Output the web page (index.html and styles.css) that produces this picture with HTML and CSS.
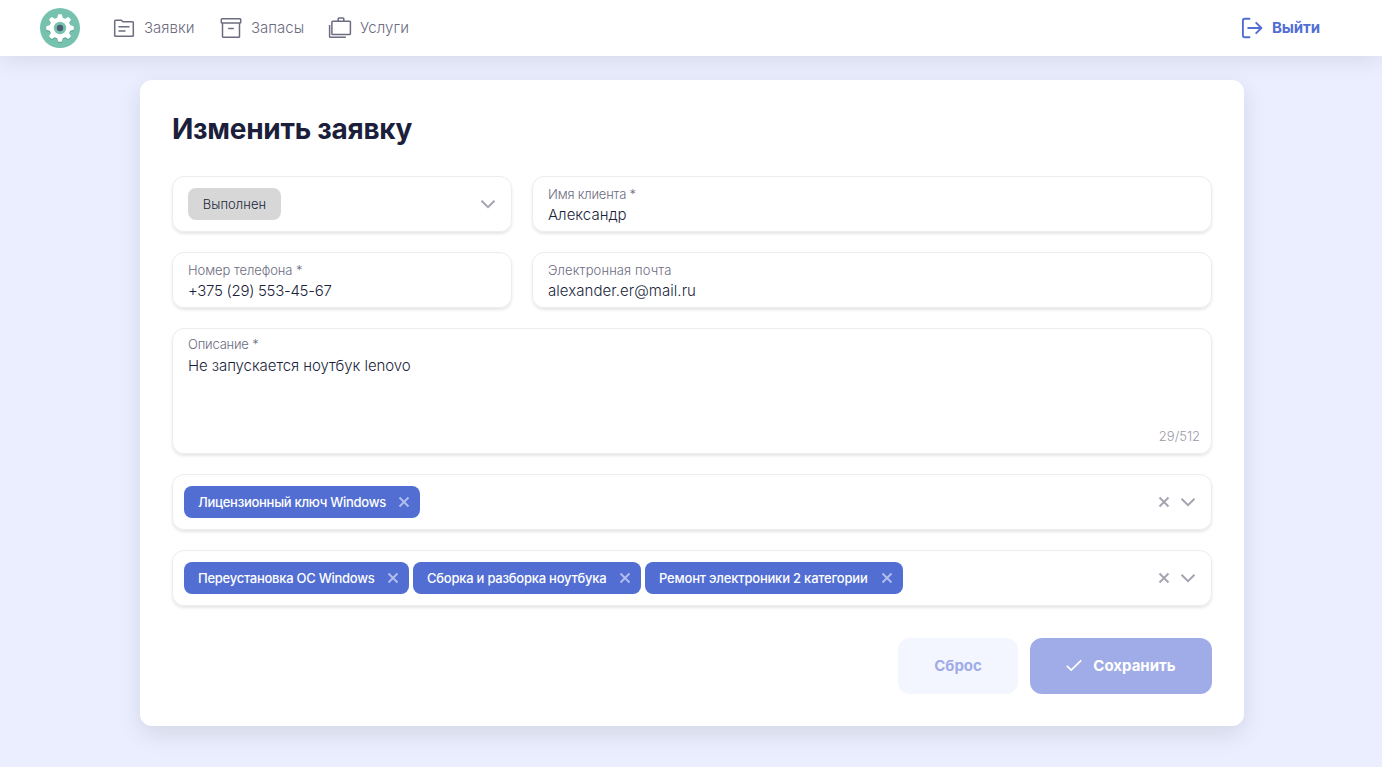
FILE: index.html
```html
<!DOCTYPE html>
<html lang="ru">
<head>
<meta charset="utf-8">
<title>Изменить заявку</title>
<link rel="stylesheet" href="styles.css">
</head>
<body>
<header class="header">
  <svg class="logo" viewBox="0 0 40 40">
    <circle cx="20" cy="20" r="20" fill="#76c2af"/>
    <g transform="translate(20 21.2)" fill="#5fa593" stroke="#5fa593" stroke-linejoin="round"><use href="#gear"/></g>
    <g transform="translate(20 20)" fill="#fff" stroke="#fff" stroke-linejoin="round"><g id="gear"><circle r="10.5" stroke="none"/><path id="tooth" stroke-width="1" d="M-2.6-9 -1.5-13.2H1.5L2.6-9Z"/><use href="#tooth" transform="rotate(45)"/><use href="#tooth" transform="rotate(90)"/><use href="#tooth" transform="rotate(135)"/><use href="#tooth" transform="rotate(180)"/><use href="#tooth" transform="rotate(225)"/><use href="#tooth" transform="rotate(270)"/><use href="#tooth" transform="rotate(315)"/></g></g>
    <circle cx="20" cy="20" r="6.2" fill="#76c2af"/>
    <circle cx="20" cy="20" r="3.2" fill="#4f5d73"/>
  </svg>
  <nav class="nav">
    <a class="nav-link nav-orders"><svg class="icon" viewBox="0 0 24 24"><path d="M2.7 20.2V5q0-.8.8-.8h5.8l1.6 1.6h9.6q.8 0 .8.8v12.8q0 .8-.8.8H3.5q-.8 0-.8-.8M6.5 10.7h11M6.5 15h7"/></svg><span>Заявки</span></a>
    <a class="nav-link nav-stock"><svg class="icon" viewBox="0 0 24 24"><path d="M3.1 2.7h17.8q.8 0 .8.8v2.8q0 .8-.8.8H3.1q-.8 0-.8-.8V3.500q0-.8.8-.8M3.500 7.200v13.200q0 .8.8.8h15.400q.8 0 .8-.8V7.200M9.200 12.500h5.600"/></svg><span>Запасы</span></a>
    <a class="nav-link nav-services"><svg class="icon" viewBox="0 0 24 24"><path d="M4.700 5.200h16.900q.8 0 .8.8v11.800q0 .8-.8.8H4.700q-.8 0-.8-.8V6q0-.8.8-.8M10.200 5V2.700q0-.8.8-.8h4q.8 0 .8.8V5M1.600 9v11.400q0 .8.8.8h15.400"/></svg><span>Услуги</span></a>
  </nav>
  <a class="logout"><svg class="icon" viewBox="0 0 24 24"><path d="M9.500 2.700H4.700q-1.800 0-1.800 1.800v15q0 1.800 1.800 1.800h4.800M8.200 12H21M16.200 6.800 21.400 12l-5.200 5.200"/></svg><span>Выйти</span></a>
</header>
<main class="card">
  <h1 class="title"><span>Изменить заявку</span></h1>
  <form class="form">
    <div class="row">
      <div class="field select status-field">
        <span class="status">Выполнен</span>
        <svg class="arrow" viewBox="0 0 16 16"><path d="M1.500 4.700 8 11.100l6.500-6.400"/></svg>
      </div>
      <div class="field"><label class="label name-label">Имя клиента *</label><div class="value name-value">Александр</div></div>
    </div>
    <div class="row">
      <div class="field"><label class="label phone-label">Номер телефона *</label><div class="value phone-value">+375 (29) 553-45-67</div></div>
      <div class="field"><label class="label mail-label">Электронная почта</label><div class="value mail-value">alexander.er@mail.ru</div></div>
    </div>
    <div class="field area"><label class="label desc-label">Описание *</label><div class="value desc-value">Не запускается ноутбук lenovo</div><span class="counter">29/512</span></div>
    <div class="field select">
      <div class="tags">
        <span class="tag tag-license"><span>Лицензионный ключ Windows</span><svg class="cross" viewBox="0 0 12 12"><path d="m1.500 1.500 9 9m0-9-9 9"/></svg></span>
      </div>
      <svg class="cross clear" viewBox="0 0 12 12"><path d="m1.500 1.500 9 9m0-9-9 9"/></svg>
      <svg class="arrow" viewBox="0 0 16 16"><path d="M1.500 4.700 8 11.100l6.500-6.400"/></svg>
    </div>
    <div class="field select">
      <div class="tags">
        <span class="tag tag-reinstall"><span>Переустановка ОС Windows</span><svg class="cross" viewBox="0 0 12 12"><path d="m1.500 1.500 9 9m0-9-9 9"/></svg></span>
        <span class="tag tag-assembly"><span>Сборка и разборка ноутбука</span><svg class="cross" viewBox="0 0 12 12"><path d="m1.500 1.500 9 9m0-9-9 9"/></svg></span>
        <span class="tag tag-repair"><span>Ремонт электроники 2 категории</span><svg class="cross" viewBox="0 0 12 12"><path d="m1.500 1.500 9 9m0-9-9 9"/></svg></span>
      </div>
      <svg class="cross clear" viewBox="0 0 12 12"><path d="m1.500 1.500 9 9m0-9-9 9"/></svg>
      <svg class="arrow" viewBox="0 0 16 16"><path d="M1.500 4.700 8 11.100l6.500-6.400"/></svg>
    </div>
    <div class="actions">
      <button type="button" class="button reset">Сброс</button>
      <button type="button" class="button save"><svg class="check" viewBox="0 0 16 16"><path d="M.8 7.800 5.200 12.100 15.200 2.300"/></svg><span>Сохранить</span></button>
    </div>
  </form>
</main>
</body>
</html>
```

FILE: styles.css
```css
* { box-sizing: border-box; }
body { margin: 0; height: 767px; overflow: hidden; background: #ebeefe; font-family: Inter, "Noto Sans", sans-serif; font-size: 15px; line-height: 20px; color: #1b1f3b; white-space: nowrap; }
svg { display: block; flex: none; fill: none; stroke: currentColor; }
.header { height: 56px; display: flex; align-items: center; padding: 0 62px 0 40px; background: #fff; box-shadow: 0 4px 24px rgba(0, 0, 0, .09); }
.logo { width: 40px; height: 40px; stroke: none; }
.nav { display: flex; margin-left: 32px; color: #6c6c80; }
.nav-link, .logout { display: flex; align-items: center; gap: 8px; }
.nav-link { font-weight: 300; }
.nav-orders { width: 107px; }
.nav-stock { width: 109px; }
.nav-services { letter-spacing: .15px; }
.icon { width: 24px; height: 24px; stroke-width: 1.5; }
.logout { width: 80px; margin-left: auto; color: #526ed3; font-weight: 700; letter-spacing: -.1px; }
.logout .icon { stroke-width: 1.900; stroke-linecap: round; stroke-linejoin: round; }
.card { width: 1104px; height: 646px; margin: 24px 0 0 140px; padding: 31px 32px; border-radius: 12px; background: #fff; box-shadow: 0 8px 24px rgba(0, 0, 0, .1); }
.title { margin: 0 0 29px; font-size: 28px; line-height: 36px; font-weight: 700; letter-spacing: -.28px; }
.form { display: flex; flex-direction: column; gap: 20px; }
.row { display: grid; grid-template-columns: 340px 680px; gap: 20px; }
.field { height: 56px; padding: 7px 15px; border: 1px solid #ededed; border-radius: 12px; box-shadow: 0 2px 3px rgba(0, 0, 0, .1); }
.label { display: block; margin-bottom: 1px; font-size: 13px; line-height: 20px; font-weight: 300; color: #6c6c80; }
.name-label, .desc-label { letter-spacing: -.2px; }
.phone-label { letter-spacing: -.06px; }
.mail-label { letter-spacing: .12px; }
.value { font-size: 15px; line-height: 20px; font-weight: 360; }
.name-value { letter-spacing: .02px; }
.phone-value { letter-spacing: -.3px; }
.mail-value { letter-spacing: .05px; }
.desc-value { letter-spacing: -.07px; }
.select { display: flex; align-items: center; padding: 0 15px 0 11px; }
.status-field { padding-left: 15px; }
.status { width: 93px; height: 32px; border-radius: 8px; background: #d7d7d7; font-size: 13px; line-height: 32px; font-weight: 350; text-align: center; letter-spacing: .08px; }
.arrow { width: 16px; height: 16px; margin-left: auto; color: #a4a4b2; stroke-width: 2; }
.clear { margin-left: auto; color: #a4a4b2; }
.clear + .arrow { margin-left: 10px; }
.cross { width: 12px; height: 12px; stroke-width: 1.900; }
.area { height: 126px; display: flex; flex-direction: column; padding: 5px 11px 7px 15px; }
.area .value { margin-top: 1px; }
.counter { margin: auto 0 0 auto; font-size: 13px; font-weight: 300; color: #9a9aa8; }
.tags { display: flex; gap: 4px; }
.tag { height: 32px; padding: 0 10px 0 14px; border-radius: 8px; display: flex; align-items: center; justify-content: space-between; background: #526ed3; color: #fff; font-size: 13px; font-weight: 500; }
.tag .cross { opacity: .55; }
.tag-license { width: 236px; letter-spacing: -.27px; }
.tag-reinstall { width: 225px; letter-spacing: -.26px; }
.tag-assembly { width: 228px; letter-spacing: -.24px; }
.tag-repair { width: 258px; letter-spacing: -.2px; }
.actions { display: flex; justify-content: flex-end; gap: 12px; margin-top: 12px; }
.button { height: 56px; padding: 0; border: 0; border-radius: 12px; font: 700 15px/20px Inter, "Noto Sans", sans-serif; display: flex; align-items: center; justify-content: center; }
.reset { width: 120px; background: #f4f6ff; color: #a0ace7; }
.save { width: 182px; gap: 11px; background: #a0ace7; color: #fff; }
.check { width: 16px; height: 16px; stroke-width: 1.700; }
```
